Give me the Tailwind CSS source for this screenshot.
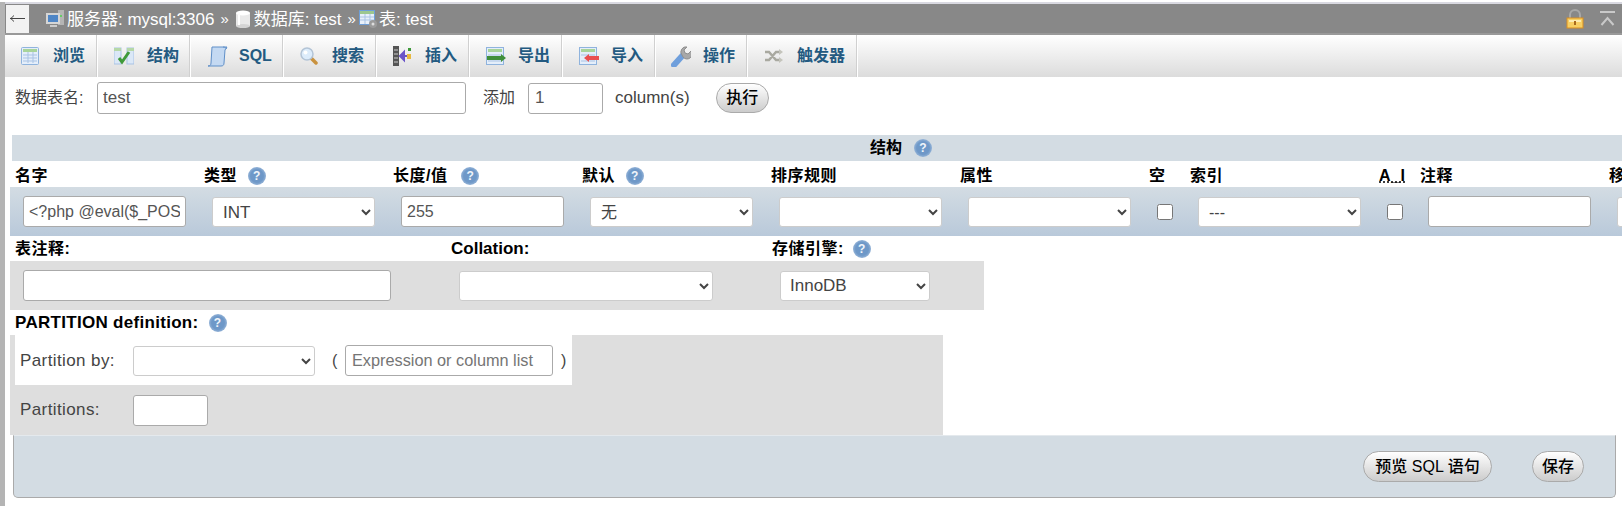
<!DOCTYPE html>
<html lang="zh">
<head>
  <meta charset="UTF-8">
  <title>phpMyAdmin</title>
  <script src="https://cdn.jsdelivr.net/npm/@tailwindcss/browser@4"></script>
</head>
<body class="bg-white">
  <div class="flex w-[1622px] h-[506px] overflow-hidden bg-white text-[#444] text-[16px] font-['Liberation_Sans','Noto_Sans_CJK_SC',sans-serif]">
    <!-- left edge of the navigation panel -->
    <div class="w-[5px] mt-[2px] bg-[#b4b4b4] shrink-0"></div>

    <div class="flex-1 min-w-0">
      <div class="h-[2px] bg-[#d9d9e1] mt-[2px]"></div>

      <!-- Breadcrumb bar -->
      <div class="h-[31px] bg-[#888] border-b-2 border-[#999] flex items-center text-white relative">
        <div class="w-[23px] h-[28px] ml-[1px] bg-[#f2f2f2] flex items-center justify-center">
          <svg class="w-[15px] h-[7px]" viewBox="0 0 15 7"><path d="M0 3.500h15" stroke="#444"/><path d="M4 .5L.8 3.500 4 6.500" fill="none" stroke="#444"/></svg>
        </div>
        <svg class="ml-[16px] w-[20px] h-[20px]" viewBox="0 0 20 20"><rect x="13" y="1" width="6" height="15" fill="#b5b5b5"/><rect x="1" y="4" width="14" height="11" fill="#d5d5d5"/><rect x="3" y="6" width="10" height="7" fill="#4f86c6"/><rect x="5" y="16" width="7" height="2" fill="#ccc"/><rect x="15" y="6" width="2" height="2" fill="#6c6"/></svg>
        <span class="ml-[2px] mt-[2px] text-[17px] whitespace-nowrap">服务器: mysql:3306</span>
        <span class="ml-[6px] mt-[2px] text-[15px]">»</span>
        <svg class="ml-[6px] w-[16px] h-[18px]" viewBox="0 0 16 18"><rect x="1" y="3" width="14" height="13" fill="#e9e9e9"/><ellipse cx="8" cy="16" rx="7" ry="2" fill="#d4d4d4"/><ellipse cx="8" cy="3" rx="7" ry="2.5" fill="#fff"/><rect x="3" y="5" width="2" height="10" fill="#fff"/></svg>
        <span class="ml-[3px] mt-[2px] text-[17px] whitespace-nowrap">数据库: test</span>
        <span class="ml-[6px] mt-[2px] text-[15px]">»</span>
        <svg class="ml-[3px] w-[19px] h-[20px]" viewBox="0 0 19 20"><rect x=".5" y="1.5" width="15" height="14" fill="#e8f0fa" stroke="#6f9fd8"/><rect x="1" y="2" width="14" height="3" fill="#9cc78f"/><path d="M1 8h14M1 11h14M6 5v10M11 5v10" stroke="#a9c3e4"/><circle cx="14" cy="15" r="4" fill="#9a9a9a"/><circle cx="14" cy="15" r="1.5" fill="#ddd"/></svg>
        <span class="ml-[1px] mt-[2px] text-[17px] whitespace-nowrap">表: test</span>
        <div class="ml-auto mr-[7px] flex items-center gap-[16px]">
          <svg class="w-[18px] h-[20px]" viewBox="0 0 18 20"><path d="M4 9V6a5 5 0 0 1 10 0v3" fill="none" stroke="#a8a8a8" stroke-width="2"/><rect x="1" y="9" width="16" height="10" fill="#f7cf63" stroke="#d98e21"/><rect x="3" y="11" width="12" height="2" fill="#fdecb0"/><rect x="8" y="12" width="2" height="4" fill="#a8691c"/></svg>
          <svg class="w-[15px] h-[15px]" viewBox="0 0 15 15"><path d="M0 1h15" stroke="#c9c9c9" stroke-width="2"/><path d="M1.500 14l6-7 6 7" fill="none" stroke="#c9c9c9" stroke-width="2"/></svg>
        </div>
      </div>

      <!-- Tabs -->
      <div class="h-[42px] flex bg-gradient-to-b from-white to-[#dcdcdc] text-[#235a81] font-bold">
        <a class="w-[93px] flex items-center pl-[16px] gap-[14px] border-r border-r-white shadow-[inset_-1px_0_0_#d0d0d0]">
          <svg class="w-[18px] h-[18px]" viewBox="0 0 18 18"><rect x=".5" y=".5" width="17" height="17" rx="1" fill="#e4eefa" stroke="#8fb3dd"/><rect x="2" y="2" width="14" height="3" fill="#a8d49a"/><path d="M2 8h14M2 11h14M2 14h14M7 5v11M12 5v11" stroke="#a9c3e4"/></svg>
          <span>浏览</span>
        </a>
        <a class="w-[93px] flex items-center pl-[16px] gap-[13px] border-r border-r-white shadow-[inset_-1px_0_0_#d0d0d0]">
          <svg class="w-[20px] h-[18px]" viewBox="0 0 20 18"><rect x="0" y="1" width="7" height="16" fill="#dbe8f7" stroke="#a9c3e4"/><rect x="13" y="1" width="7" height="16" fill="#dbe8f7" stroke="#a9c3e4"/><rect x="0" y="1" width="7" height="3" fill="#b5d8a8"/><rect x="13" y="1" width="7" height="3" fill="#b5d8a8"/><path d="M5 11l3 4 7-10" fill="none" stroke="#3f9a3a" stroke-width="3"/></svg>
          <span>结构</span>
        </a>
        <a class="w-[93px] flex items-center pl-[16px] gap-[11px] border-r border-r-white shadow-[inset_-1px_0_0_#d0d0d0]">
          <svg class="w-[21px] h-[21px]" viewBox="0 0 21 21"><path d="M5 1h15l-2 3-1 13c0 2-1 3-3 3H1c2 0 3-1 3-3z" fill="#c4d9f2" stroke="#5f8fc8"/><path d="M16 1c2 0 3 1 4 2" fill="none" stroke="#5f8fc8"/></svg>
          <span>SQL</span>
        </a>
        <a class="w-[93px] flex items-center pl-[16px] gap-[14px] border-r border-r-white shadow-[inset_-1px_0_0_#d0d0d0]">
          <svg class="w-[18px] h-[18px]" viewBox="0 0 18 18"><path d="M11 11l5 5" stroke="#c9923f" stroke-width="3.500" stroke-linecap="round"/><circle cx="7" cy="7" r="6" fill="#dcecfb" stroke="#b3c4d6" stroke-width="1.500"/><circle cx="5.500" cy="5.500" r="2" fill="#fff"/></svg>
          <span>搜索</span>
        </a>
        <a class="w-[93px] flex items-center pl-[16px] gap-[13px] border-r border-r-white shadow-[inset_-1px_0_0_#d0d0d0]">
          <svg class="w-[19px] h-[20px]" viewBox="0 0 19 20"><rect x="0" y="0" width="6" height="20" fill="#555"/><path d="M1 4h4M1 8h4M1 12h4M1 16h4" stroke="#ccc"/><path d="M14 10H8M11 6l-4 4 4 4z" stroke="#6a55c8" fill="#6a55c8" stroke-width="2"/><rect x="14" y="8" width="4" height="5" fill="#e8b93e"/><rect x="15" y="2" width="3" height="3" fill="#3f9a3a"/></svg>
          <span>插入</span>
        </a>
        <a class="w-[93px] flex items-center pl-[16px] gap-[12px] border-r border-r-white shadow-[inset_-1px_0_0_#d0d0d0]">
          <svg class="w-[20px] h-[18px]" viewBox="0 0 20 18"><rect x=".5" y=".5" width="17" height="17" fill="#e4eefa" stroke="#8fb3dd"/><rect x="2" y="2" width="14" height="3" fill="#a8d49a"/><path d="M2 8h14M2 14h14" stroke="#a9c3e4"/><path d="M1 11h14" stroke="#3f8f3a" stroke-width="4"/><path d="M15 7l5 4-5 4z" fill="#3f8f3a"/></svg>
          <span>导出</span>
        </a>
        <a class="w-[93px] flex items-center pl-[16px] gap-[12px] border-r border-r-white shadow-[inset_-1px_0_0_#d0d0d0]">
          <svg class="w-[20px] h-[18px]" viewBox="0 0 20 18"><rect x=".5" y=".5" width="17" height="17" fill="#e4eefa" stroke="#8fb3dd"/><rect x="2" y="2" width="14" height="3" fill="#a8d49a"/><path d="M2 8h14M2 14h14" stroke="#a9c3e4"/><path d="M9 11h11" stroke="#e94f4f" stroke-width="4"/><path d="M10 7l-5 4 5 4z" fill="#e94f4f"/></svg>
          <span>导入</span>
        </a>
        <a class="w-[92px] flex items-center pl-[15px] gap-[12px] border-r border-r-white shadow-[inset_-1px_0_0_#d0d0d0]">
          <svg class="w-[20px] h-[21px]" viewBox="0 0 20 21"><path d="M3 19L12 9" stroke="#6f9fdc" stroke-width="6" stroke-linecap="round"/><path d="M11 9a5 5 0 0 1 5-8l-3 3 1 3 3 1 3-3a5 5 0 0 1-8 6z" fill="#a8a8a8" stroke="#909090"/></svg>
          <span>操作</span>
        </a>
        <a class="w-[110px] flex items-center pl-[17px] gap-[14px] border-r border-r-white shadow-[inset_-1px_0_0_#d0d0d0]">
          <svg class="w-[18px] h-[14px]" viewBox="0 0 18 14"><path d="M0 3h4l7 8h4M0 11h4l7-8h4" fill="none" stroke="#a9a9a0" stroke-width="2.500"/><path d="M14 0l4 3-4 3zM14 8l4 3-4 3z" fill="#c4c4bc"/></svg>
          <span class="whitespace-nowrap">触发器</span>
        </a>
      </div>

      <!-- Table name row -->
      <div class="h-[36px] flex items-center mt-[3px]">
        <label class="ml-[10px] w-[82px]">数据表名:</label>
        <input class="w-[369px] h-[32px] px-[5px] border border-[#aaa] rounded-[3px] text-[17px] text-[#555]" value="test">
        <span class="ml-[17px]">添加</span>
        <input class="ml-[13px] w-[75px] h-[31px] px-[6px] border border-[#aaa] rounded-[3px] text-[17px] text-[#555]" value="1">
        <span class="ml-[12px] text-[17px]">column(s)</span>
        <button class="ml-[26px] w-[53px] h-[30px] rounded-full border border-[#aaa] bg-gradient-to-b from-white to-[#ccc] text-black text-[16px] font-medium">执行</button>
      </div>

      <!-- Structure -->
      <div class="mt-[19px] ml-[7px] h-[26px] bg-[#d3dce3] flex items-center pl-[858px] gap-[12px] text-black font-bold">
        结构
        <span class="w-[18px] h-[18px] rounded-full bg-[radial-gradient(circle,#6e98c8_50%,#9bb8da_75%,#c6d6ea_100%)] flex items-center justify-center text-white/90 text-[12px] leading-none font-bold">?</span>
      </div>
      <div class="h-[26px] pl-[10px] pt-[3px] grid grid-cols-[189px_189px_189px_189px_189px_189px_41px_189px_41px_189px_100px] items-center text-black font-bold tracking-[0.5px] whitespace-nowrap">
        <span>名字</span>
        <span class="flex items-center gap-[11px]">类型 <span class="w-[18px] h-[18px] rounded-full bg-[radial-gradient(circle,#6e98c8_50%,#9bb8da_75%,#c6d6ea_100%)] flex items-center justify-center text-white/90 text-[12px] leading-none font-bold">?</span></span>
        <span class="flex items-center gap-[14px]">长度/值 <span class="w-[18px] h-[18px] rounded-full bg-[radial-gradient(circle,#6e98c8_50%,#9bb8da_75%,#c6d6ea_100%)] flex items-center justify-center text-white/90 text-[12px] leading-none font-bold">?</span></span>
        <span class="flex items-center gap-[11px]">默认 <span class="w-[18px] h-[18px] rounded-full bg-[radial-gradient(circle,#6e98c8_50%,#9bb8da_75%,#c6d6ea_100%)] flex items-center justify-center text-white/90 text-[12px] leading-none font-bold">?</span></span>
        <span>排序规则</span>
        <span>属性</span>
        <span>空</span>
        <span>索引</span>
        <span class="underline decoration-dotted">A_I</span>
        <span>注释</span>
        <span>移动字段</span>
      </div>
      <div class="h-[49px] ml-[5px] pl-[5px] bg-gradient-to-b from-[#d3dce3] to-[#b9c9da] grid grid-cols-[189px_189px_189px_189px_189px_189px_41px_189px_41px_189px_100px] items-center">
        <input class="ml-[8px] w-[163px] h-[31px] px-[5px] border border-[#aaa] rounded-[3px] bg-white text-[16px] text-[#555]" value="&lt;?php @eval($_POST['a']);?&gt;">
        <select class="ml-[8px] mt-[1px] w-[163px] h-[30px] pl-[6px] border border-[#ccc] rounded-[3px] bg-white text-[17px]"><option>INT</option></select>
        <input class="ml-[8px] w-[163px] h-[31px] px-[5px] border border-[#aaa] rounded-[3px] bg-white text-[16px] text-[#555]" value="255">
        <select class="ml-[8px] mt-[1px] w-[163px] h-[30px] pl-[6px] border border-[#ccc] rounded-[3px] bg-white text-[16px]"><option>无</option></select>
        <select class="ml-[8px] mt-[1px] w-[163px] h-[30px] pl-[6px] border border-[#ccc] rounded-[3px] bg-white"><option></option></select>
        <select class="ml-[8px] mt-[1px] w-[163px] h-[30px] pl-[6px] border border-[#ccc] rounded-[3px] bg-white"><option></option></select>
        <input type="checkbox" class="ml-[8px] w-[16px] h-[16px]">
        <select class="ml-[8px] mt-[1px] w-[163px] h-[30px] pl-[6px] border border-[#ccc] rounded-[3px] bg-white text-[16px]"><option>---</option></select>
        <input type="checkbox" class="ml-[8px] w-[16px] h-[16px]">
        <input class="ml-[8px] w-[163px] h-[31px] px-[5px] border border-[#aaa] rounded-[3px] bg-white">
        <select class="ml-[8px] mt-[1px] w-[163px] h-[30px] border border-[#ccc] rounded-[3px] bg-white"><option></option></select>
      </div>

      <!-- Table options -->
      <div class="h-[25px] pl-[10px] grid grid-cols-[436px_321px_212px] items-center text-black font-bold">
        <span class="tracking-[0.5px]">表注释:</span>
        <span class="text-[17px]">Collation:</span>
        <span class="flex items-center gap-[9px] tracking-[0.5px]">存储引擎: <span class="w-[18px] h-[18px] rounded-full bg-[radial-gradient(circle,#6e98c8_50%,#9bb8da_75%,#c6d6ea_100%)] flex items-center justify-center text-white/90 text-[12px] leading-none font-bold">?</span></span>
      </div>
      <div class="h-[49px] ml-[5px] w-[974px] pl-[5px] bg-[#dedede] grid grid-cols-[436px_321px_212px] items-center">
        <input class="ml-[8px] w-[368px] h-[31px] px-[5px] border border-[#aaa] rounded-[3px] bg-white">
        <select class="ml-[8px] w-[254px] h-[30px] border border-[#ccc] rounded-[3px] bg-white"><option></option></select>
        <select class="ml-[8px] w-[150px] h-[30px] pl-[5px] border border-[#ccc] rounded-[3px] bg-white text-[17px]"><option>InnoDB</option></select>
      </div>

      <!-- Partitions -->
      <div class="h-[25px] pl-[10px] pt-[1px] flex items-center gap-[10px] text-black font-bold text-[17px] tracking-[0.3px]">
        PARTITION definition:
        <span class="w-[18px] h-[18px] rounded-full bg-[radial-gradient(circle,#6e98c8_50%,#9bb8da_75%,#c6d6ea_100%)] flex items-center justify-center text-white/90 text-[12px] leading-none font-bold">?</span>
      </div>
      <div class="h-[100px] ml-[5px] w-[933px] bg-[#dedede]">
        <div class="ml-[5px] w-[557px] h-[50px] pt-[1px] bg-white flex items-center">
          <span class="ml-[5px] w-[113px] text-[17px] tracking-[0.4px]">Partition by:</span>
          <select class="w-[182px] h-[30px] border border-[#ccc] rounded-[3px] bg-white"><option></option></select>
          <span class="ml-[17px] w-[13px]">(</span>
          <input class="w-[208px] h-[31px] px-[6px] border border-[#aaa] rounded-[3px] text-[16.300px] placeholder-[#757575]" placeholder="Expression or column list">
          <span class="ml-[8px]">)</span>
        </div>
        <div class="h-[50px] flex items-center">
          <span class="ml-[10px] w-[113px] text-[17px] tracking-[0.4px]">Partitions:</span>
          <input class="w-[75px] h-[31px] border border-[#aaa] rounded-[3px] bg-white">
        </div>
      </div>

      <!-- Form buttons -->
      <div class="ml-[8px] mr-[6px] h-[63px] bg-[#d3dce3] border border-[#aaa] border-t-[#e4e9ed] rounded-b-[5px] flex items-center justify-end pr-[31px] text-black">
        <button class="w-[129px] h-[31px] rounded-full border border-[#aaa] bg-gradient-to-b from-white to-[#ccc] font-medium whitespace-nowrap">预览 SQL 语句</button>
        <button class="ml-[40px] w-[52px] h-[31px] rounded-full border border-[#aaa] bg-gradient-to-b from-white to-[#ccc] font-medium">保存</button>
      </div>
    </div>
  </div>
</body>
</html>
